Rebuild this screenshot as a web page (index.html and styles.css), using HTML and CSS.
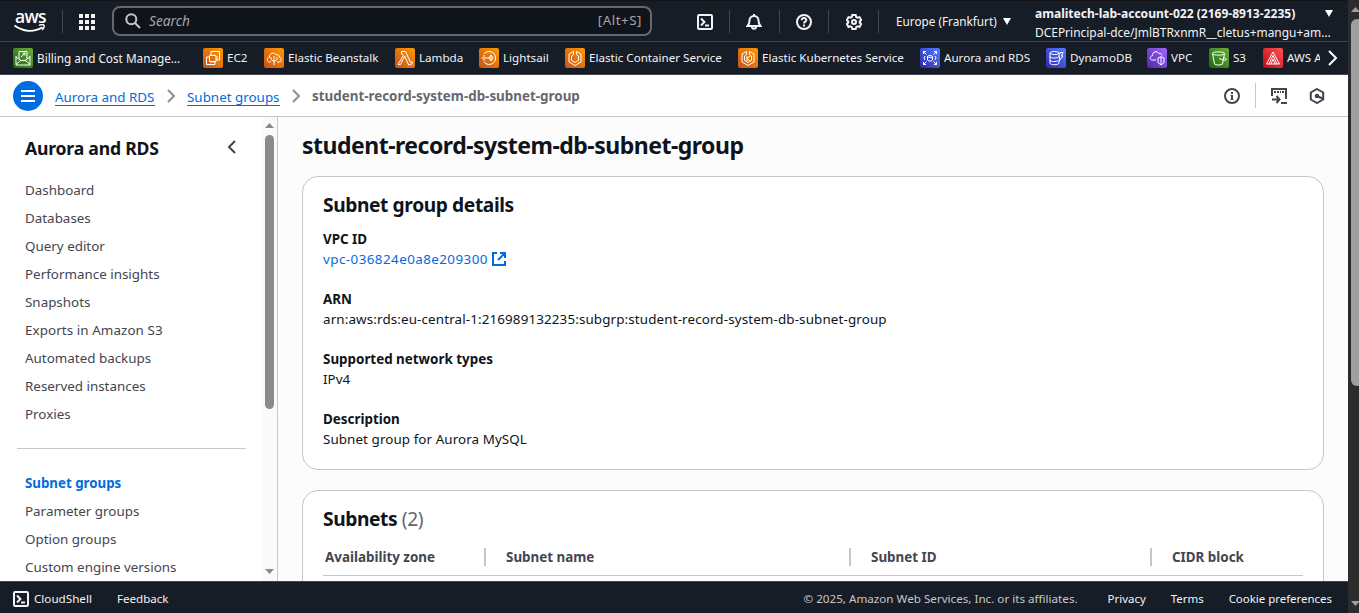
FILE: index.html
```html
<!DOCTYPE html>
<html lang="en">
<head>
<meta charset="utf-8">
<title>student-record-system-db-subnet-group</title>
<link rel="stylesheet" href="styles.css">
</head>
<body>
<svg width="0" height="0" class="defs" aria-hidden="true">
  <defs>
    <symbol id="shell" viewBox="0 0 16 16"><rect x="1" y="1" width="14" height="14" rx="1.2"/><path d="M4 4.5 7.4 8 4 11.5M8 11.5h4"/></symbol>
    <symbol id="chev" viewBox="0 0 16 16"><path d="m5 2 6 6-6 6"/></symbol>
  </defs>
</svg>
<div class="window">
  <div class="app">
    <header class="topbar">
      <div class="logo">
        <span>aws</span>
        <svg width="32" height="9" viewBox="0 0 32 9"><path d="M.5 1.500C9 8 20 8.500 28.500 3.200" stroke="#fff" stroke-width="1.800" fill="none"/><path d="M25 1.400c2-.8 4.500-.8 5 0s-.4 3-1.800 4.500" stroke="#fff" stroke-width="1.400" fill="none"/></svg>
      </div>
      <div class="apps"><svg width="16" height="16" viewBox="0 0 16 16" fill="#f3f3f7"><path d="M0 0h4v4H0zM6 0h4v4H6zM12 0h4v4h-4zM0 6h4v4H0zM6 6h4v4H6zM12 6h4v4h-4zM0 12h4v4H0zM6 12h4v4H6zM12 12h4v4h-4z"/></svg></div>
      <div class="search">
        <svg width="16" height="16" viewBox="0 0 16 16" fill="none" stroke="#c6c6cd" stroke-width="2"><circle cx="6.300" cy="6.300" r="5"/><path d="m10 10 5 5"/></svg>
        <span class="placeholder">Search</span><span class="shortcut">[Alt+S]</span>
      </div>
      <div class="tool"><svg class="ic"><use href="#shell"/></svg></div>
      <div class="tool bell"><svg class="ic" viewBox="0 0 16 16"><path d="M1.500 12c1.500-1.500 2-3 2-5.500a4.500 4.500 0 0 1 9 0c0 2.500.500 4 2 5.500zM8 2V0M6 12.500c0 3 4 3 4 0"/></svg></div>
      <div class="tool"><svg class="ic" viewBox="0 0 16 16"><circle cx="8" cy="8" r="7"/><path d="M5.700 6.300C5.700 3.200 10.300 3.200 10.300 6c0 1.700-2.300 1.500-2.300 3.500M8 10.500v2"/></svg></div>
      <div class="tool"><svg class="ic" viewBox="0 0 16 16"><path d="M6.300 1h3.400l.5 2 1.300.700 2-.600 1.700 3-1.500 1.400v1L15.200 10l-1.700 3-2-.600-1.300.700-.5 1.900H6.300l-.5-1.900-1.300-.7-2 .6-1.700-3 1.500-1.500v-1L.8 6.100l1.700-3 2 .6L5.800 3z"/><circle cx="8" cy="8" r="2"/></svg></div>
      <div class="region"><span>Europe (Frankfurt)</span><svg width="8" height="7"><path d="M0 0h8L4 7z" fill="#fff"/></svg></div>
      <div class="account">
        <div class="acct-row"><b>amalitech-lab-account-022 (2169-8913-2235)</b><svg width="8" height="7"><path d="M0 0h8L4 7z" fill="#fff"/></svg></div>
        <div class="role">DCEPrincipal-dce/JmlBTRxnmR__cletus+mangu+am…</div>
      </div>
    </header>

    <nav class="services">
      <a><svg class="svc green" viewBox="0 0 20 20"><path d="M3 8v9h14V8M3 9l5 3.500h4L17 9M3 16.500 8 12M17 16.500 12 12M6 11V3.500h8V11M8 9l4-4M9.500 5H12v2.500"/></svg><span class="billing">Billing and Cost Manage…</span></a>
      <a><svg class="svc orange" viewBox="0 0 20 20"><path d="M8 8V3.500h8.500V12H13M6.500 7.500h6.500v6H6.500zM6 9H3.500v7.500H12V14M8 6v1.500M11 6v1.500M8 13.500V15M11 13.500V15M13 9h2M13 11h2"/></svg><span>EC2</span></a>
      <a><svg class="svc orange" viewBox="0 0 20 20"><path d="M7 14H5.500C2.500 14 2.500 9.500 5.500 9.200 5 5 10.500 3.500 12 7c2-1 3.500.5 3.300 2.200C18 9.500 18 14 15 14h-2M10 8v9M7 9v2.500l3 2M13 9v2.500l-3 2"/></svg><span>Elastic Beanstalk</span></a>
      <a><svg class="svc orange" viewBox="0 0 20 20"><path d="M6.500 3.500h4l5 11 1.500-.8.5 2-3.800 1.300-4-9-4.200 8.500H3L8.300 7.500 7.500 6h-1z"/></svg><span>Lambda</span></a>
      <a><svg class="svc orange" viewBox="0 0 20 20"><path d="M5 6a6.500 6.500 0 1 1 0 8M2.500 10H8M4 8h2M4 12h2M12 7v6M12 7l-2 3 2 3 2-3zM8 10h2"/></svg><span>Lightsail</span></a>
      <a><svg class="svc orange" viewBox="0 0 20 20"><path d="M8.500 3.500 4 6v8l6 3.500 6-3.500V6l-4.500-2.500v3L13.500 8v4.500L10 14.500l-3.500-2V8l2-1.500z"/></svg><span>Elastic Container Service</span></a>
      <a><svg class="svc orange" viewBox="0 0 20 20"><path d="M8.500 3.500 4 6v8l6 3.500 6-3.500V6l-4.500-2.500v3L13.500 8v4.500L10 14.500l-3.500-2V8l2-1.500zM9 8v5M12 8l-3 2.500 3 2.500"/></svg><span>Elastic Kubernetes Service</span></a>
      <a><svg class="svc blue" viewBox="0 0 20 20"><path d="m3.500 3.500 3 3M3.500 6V3.500H6M16.500 3.500l-3 3M14 3.500h2.500V6M3.500 16.500l3-3M3.500 14v2.500H6M16.500 16.500l-3-3M14 16.500h2.500V14M7.500 8.500v3.500c0 1.300 5 1.300 5 0V8.500c0-1.300-5-1.300-5 0 0 1.200 5 1.200 5 0M5 8l-1 2 1 2M15 8l1 2-1 2"/></svg><span>Aurora and RDS</span></a>
      <a><svg class="svc blue" viewBox="0 0 20 20"><path d="M4 5v10c0 2.300 9 2.300 9 0v-2M4 5c0-2 9-2 9 0v1M4 5c0 2 9 2 9 0M4 8.500c0 2 7 2 8.500.5M4 12c0 2 7 2 8 .5M14 4.500h3L15.500 8H17l-4 5 1-4h-1.500z"/></svg><span>DynamoDB</span></a>
      <a><svg class="svc purple" viewBox="0 0 20 20"><path d="M9 12H5.500C2.500 12 2.500 8 5.500 7.700 5 3.500 10.500 2.500 12 5.500c1.800-.5 3 .5 3 2M11 10l3-1.300 3 1.300v4.500L14 17l-3-2.500zM14 9v8"/></svg><span>VPC</span></a>
      <a><svg class="svc green" viewBox="0 0 20 20"><path d="M3.500 5.500 5.500 16c1.500 1.300 6.500 1.300 8 0l2-10.500M3.500 5.500c0-2.200 12-2.200 12 0s-12 2.200-12 0M10 10.500c3 1 6 2.300 7 1.500s-.5-2-2.500-2.500"/></svg><span>S3</span></a>
      <a><svg class="svc red" viewBox="0 0 20 20"><path d="m10 4 6.500 12h-13zM10 7.500l-4 8.500M10 7.500l4 8.500M10 11l-2 5M10 11l2 5"/></svg><span>AWS A</span></a>
      <div class="more"><svg width="16" height="18" viewBox="0 0 16 18"><path d="m4 2 7 7-7 7" fill="none" stroke="#fff" stroke-width="2"/></svg></div>
    </nav>

    <div class="crumbs">
      <div class="menu"><svg width="14" height="12"><path d="M0 1h14M0 6h14M0 11h14" stroke="#fff" stroke-width="2"/></svg></div>
      <a class="crumb c1">Aurora and RDS</a>
      <svg class="sep"><use href="#chev"/></svg>
      <a class="crumb c2">Subnet groups</a>
      <svg class="sep"><use href="#chev"/></svg>
      <b class="current">student-record-system-db-subnet-group</b>
      <div class="actions">
        <svg class="ic" viewBox="0 0 16 16"><circle cx="8" cy="8" r="7"/><path d="M8 4v2M8 7v5" /><path d="M6.500 7.500H8M6.500 11.500h3" stroke-width="1"/></svg>
        <i></i>
        <svg class="ic" viewBox="0 0 16 16"><path d="M1 8V1h14v10M1 11.500h7M5.500 8l3 3.500-3 3.500M10 15h6"/><path d="M3 4h2M6 4h2M9 4h1M11 4h2"/></svg>
        <svg class="ic" viewBox="0 0 16 16"><path d="m8 1 6.200 3.500v7L8 15l-6.200-3.500v-7zM8 8l5.500 2.500"/><circle cx="8" cy="8" r="1.300"/></svg>
      </div>
    </div>

    <div class="body">
      <aside class="side">
        <div class="side-main">
          <div class="side-head"><h2>Aurora and RDS</h2><svg width="16" height="16" viewBox="0 0 16 16"><path d="m11 2-6 6 6 6" fill="none" stroke="#424650" stroke-width="2"/></svg></div>
          <ul>
            <li>Dashboard</li><li>Databases</li><li>Query editor</li><li>Performance insights</li><li>Snapshots</li><li class="wide">Exports in Amazon S3</li><li>Automated backups</li><li>Reserved instances</li><li>Proxies</li>
          </ul>
          <hr>
          <ul>
            <li class="active">Subnet groups</li><li>Parameter groups</li><li>Option groups</li><li>Custom engine versions</li>
          </ul>
        </div>
        <div class="side-scroll"><svg width="9" height="5"><path d="M0 5h9L4.500 0z" fill="#8b8b8b"/></svg><div class="side-thumb"></div><svg width="9" height="5"><path d="M0 0h9L4.500 5z" fill="#8b8b8b"/></svg></div>
      </aside>
      <main class="content">
        <h1>student-record-system-db-subnet-group</h1>
        <section class="card">
          <h3>Subnet group details</h3>
          <dl>
            <dt>VPC ID</dt>
            <dd class="vpc"><span>vpc-036824e0a8e209300</span><svg width="14" height="14" viewBox="0 0 14 14" fill="none" stroke="#006ce0" stroke-width="2"><path d="M5 1H1v12h12V9M8 1h5v5M13 1 6 8"/></svg></dd>
            <dt>ARN</dt>
            <dd class="arn">arn:aws:rds:eu-central-1:216989132235:subgrp:student-record-system-db-subnet-group</dd>
            <dt>Supported network types</dt>
            <dd>IPv4</dd>
            <dt>Description</dt>
            <dd class="wide">Subnet group for Aurora MySQL</dd>
          </dl>
        </section>
        <section class="card subnets">
          <h3>Subnets <span>(2)</span></h3>
          <div class="thead"><span>Availability zone</span><span>Subnet name</span><span>Subnet ID</span><span>CIDR block</span></div>
        </section>
      </main>
    </div>

    <footer>
      <svg class="ic"><use href="#shell"/></svg><span class="f-shell">CloudShell</span><span class="feedback">Feedback</span>
      <span class="copy">© 2025, Amazon Web Services, Inc. or its affiliates.</span><span class="f-link">Privacy</span><span class="f-link terms">Terms</span><span class="f-link cookie">Cookie preferences</span>
    </footer>
  </div>
  <div class="scroll"><svg width="9" height="5"><path d="M0 5h9L4.500 0z" fill="#9f9f9f"/></svg><div class="thumb"></div><svg width="9" height="5"><path d="M0 0h9L4.500 5z" fill="#9f9f9f"/></svg></div>
</div>
</body>
</html>
```
FILE: styles.css
```css
* { box-sizing: border-box; }
body { margin: 0; font: 13.4px/20px "Noto Sans", sans-serif; color: #0f141a; overflow: hidden; }
h1, h2, h3, ul, dl, dd { margin: 0; padding: 0; }
.defs { display: block; }
.window { display: flex; width: 1359px; height: 613px; }
.app { flex: none; width: 1348px; display: flex; flex-direction: column; }
.ic { width: 16px; height: 16px; fill: none; stroke: currentColor; stroke-width: 2; flex: none; }
svg { flex: none; }

.topbar { height: 42px; flex: none; display: grid; grid-template-columns: 63px 49px 540px 78px 50px 49px 50px 156px 1fr; align-items: center; background: #161d26; border-top: 1px solid #131313; border-bottom: 1px solid #424650; color: #f3f3f7; font-size: 11.65px; }
.logo { height: 23px; padding-left: 14px; border-right: 1px solid #424650; display: flex; flex-direction: column; align-items: flex-start; }
.logo span { font: 600 17.5px/14px "Open Sans", sans-serif; color: #fff; letter-spacing: -.7px; padding-left: 1px; height: 15px; margin-top: -1px; }
.apps { padding-left: 16px; height: 16px; display: flex; }
.search { height: 30px; border: 2px solid #656871; border-radius: 8px; background: #0f141a; display: flex; align-items: center; padding: 0 8px 0 11px; margin-top: -1px; color: #a4a4ad; font-size: 13.7px; }
.placeholder { font-style: italic; margin-left: 8px; }
.shortcut { margin-left: auto; font-size: 13.4px; letter-spacing: .5px; margin-top: -2px; }
.tool { height: 23px; border-right: 1px solid #424650; display: flex; align-items: center; justify-content: flex-end; padding-right: 16px; }
.bell { padding-right: 17px; }
.region { display: flex; align-items: center; justify-content: space-between; padding: 0 24px 0 17px; font-size: 11.75px; }
.region span { margin-top: -2px; }
.account { align-self: stretch; line-height: 19px; padding: 3px 15px 0 0; white-space: nowrap; }
.acct-row { display: flex; align-items: center; justify-content: space-between; font-size: 12.06px; }
.role { font-size: 11.95px; }

.services { height: 33px; flex: none; display: grid; grid-template-columns: 190px 61px 131px 84px 86px 173px 182px 126px 101px 62px 54px 57px 28px; padding-left: 13px; align-items: center; background: #161d26; border-bottom: 1px solid #424650; color: #f3f3f7; font-size: 11.62px; }
.services a { display: flex; align-items: center; gap: 4px; white-space: nowrap; overflow: hidden; }
.services .billing { font-size: 11.75px; }
.svc { width: 20px; height: 20px; border-radius: 2px; fill: none; stroke: #fff; stroke-width: 1; }
.green { background: linear-gradient(45deg, #1b660f, #6cae3e); }
.orange { background: linear-gradient(45deg, #c8511b, #f90); }
.blue { background: linear-gradient(45deg, #2e27ad, #527fff); }
.purple { background: linear-gradient(45deg, #4d27a8, #a166ff); }
.red { background: linear-gradient(45deg, #bd0816, #ff5252); }
.more { display: flex; padding-left: 5px; }

.crumbs { height: 42px; flex: none; display: flex; align-items: center; padding: 0 23px 0 13px; background: #fff; border-bottom: 1px solid #c6c6cd; white-space: nowrap; }
.menu { width: 30px; height: 30px; border-radius: 50%; background: #006ce0; display: flex; align-items: center; justify-content: center; margin-right: 12px; }
.crumb { color: #006ce0; border-bottom: 1px solid #006ce0; line-height: 18px; padding-top: 1px; height: 19px; margin-top: 1px; }
.c1 { width: 100px; }
.c2 { width: 93px; }
.sep { width: 16px; height: 16px; fill: none; stroke: #8c8c94; stroke-width: 2; margin: 0 8px; }
.current { color: #656871; }
.actions { margin-left: auto; display: flex; align-items: center; color: #424650; }
.actions i { width: 1px; height: 25px; background: #c6c6cd; margin: 0 15px; }
.actions .ic + .ic { margin-left: 22px; }

.body { flex: 1; min-height: 0; display: flex; overflow: hidden; }
.side { width: 278px; flex: none; display: flex; border-right: 1px solid #c6c6cd; background: #fff; }
.side-main { flex: 1; overflow: hidden; padding-top: 19px; }
.side-head { display: flex; justify-content: space-between; padding: 0 22px 0 25px; align-items: flex-start; }
.side-head svg { margin-top: 3px; }
h2 { font-size: 17.6px; line-height: 24px; letter-spacing: -.2px; }
ul { list-style: none; padding: 16px 0 0 25px; }
li { height: 28px; line-height: 28px; color: #424650; }
.wide { letter-spacing: .08px; }
.active { color: #006ce0; font-weight: 700; font-size: 13.3px; }
hr { border: 0; height: 1px; background: #c6c6cd; margin: 20px 16px 4px 17px; }
.side-scroll { width: 15px; background: #fafafa; display: flex; flex-direction: column; align-items: center; padding: 6px 0 7px; }
.side-thumb { width: 9px; height: 274px; border-radius: 5px; background: #8b8b8b; margin: 7px 0 auto; }

.content { flex: 1; padding: 13px 24px 0; background: #fcfcfd; }
h1 { font-size: 23px; line-height: 30px; letter-spacing: -.5px; margin-bottom: 16px; }
.card { height: 294px; border: 1px solid #c6c6cd; border-radius: 16px; background: #fff; padding: 16px 20px; }
h3 { font-size: 19.2px; line-height: 24px; letter-spacing: -.4px; }
h3 span { font-weight: 400; color: #656871; }
dt { font-weight: 700; margin-top: 12px; }
dd { margin-bottom: 20px; }
dd + dt { margin-top: 0; }
.vpc { color: #006ce0; display: flex; align-items: center; gap: 4px; }
.vpc span { letter-spacing: .44px; }
.arn { letter-spacing: .13px; }
.subnets { margin-top: 20px; }
.thead { display: grid; grid-template-columns: 161px 365px 301px 153px; border-bottom: 1px solid #c6c6cd; height: 31px; margin-top: 14px; padding-bottom: 6px; color: #424650; font-weight: 700; align-items: center; }
.thead span { height: 18px; line-height: 18px; padding-left: 20px; border-left: 2px solid #c6c6cd; }
.thead span:first-child { border: 0; padding-left: 2px; }

footer { height: 32px; flex: none; display: flex; align-items: center; padding: 3px 16px 0 13px; background: #161d26; border-top: 1px solid #424650; color: #f3f3f7; font-size: 11.45px; white-space: nowrap; }
.f-shell { margin: 0 25px 0 5px; font-size: 11.65px; }
.feedback { font-size: 11.6px; }
.copy { margin-left: auto; font-size: 11.65px; color: #c6c6cd; }
.f-link { margin-left: 30px; }
.terms { margin-left: 25px; }
.cookie { margin-left: 25px; }

.scroll { width: 11px; flex: none; background: #2c2c2c; overflow: hidden; display: flex; flex-direction: column; align-items: flex-start; padding: 7px 0 7px 3px; }
.thumb { width: 12px; height: 367px; flex: none; border-radius: 6px; background: #9f9f9f; margin: 7px 0 auto; }
```
